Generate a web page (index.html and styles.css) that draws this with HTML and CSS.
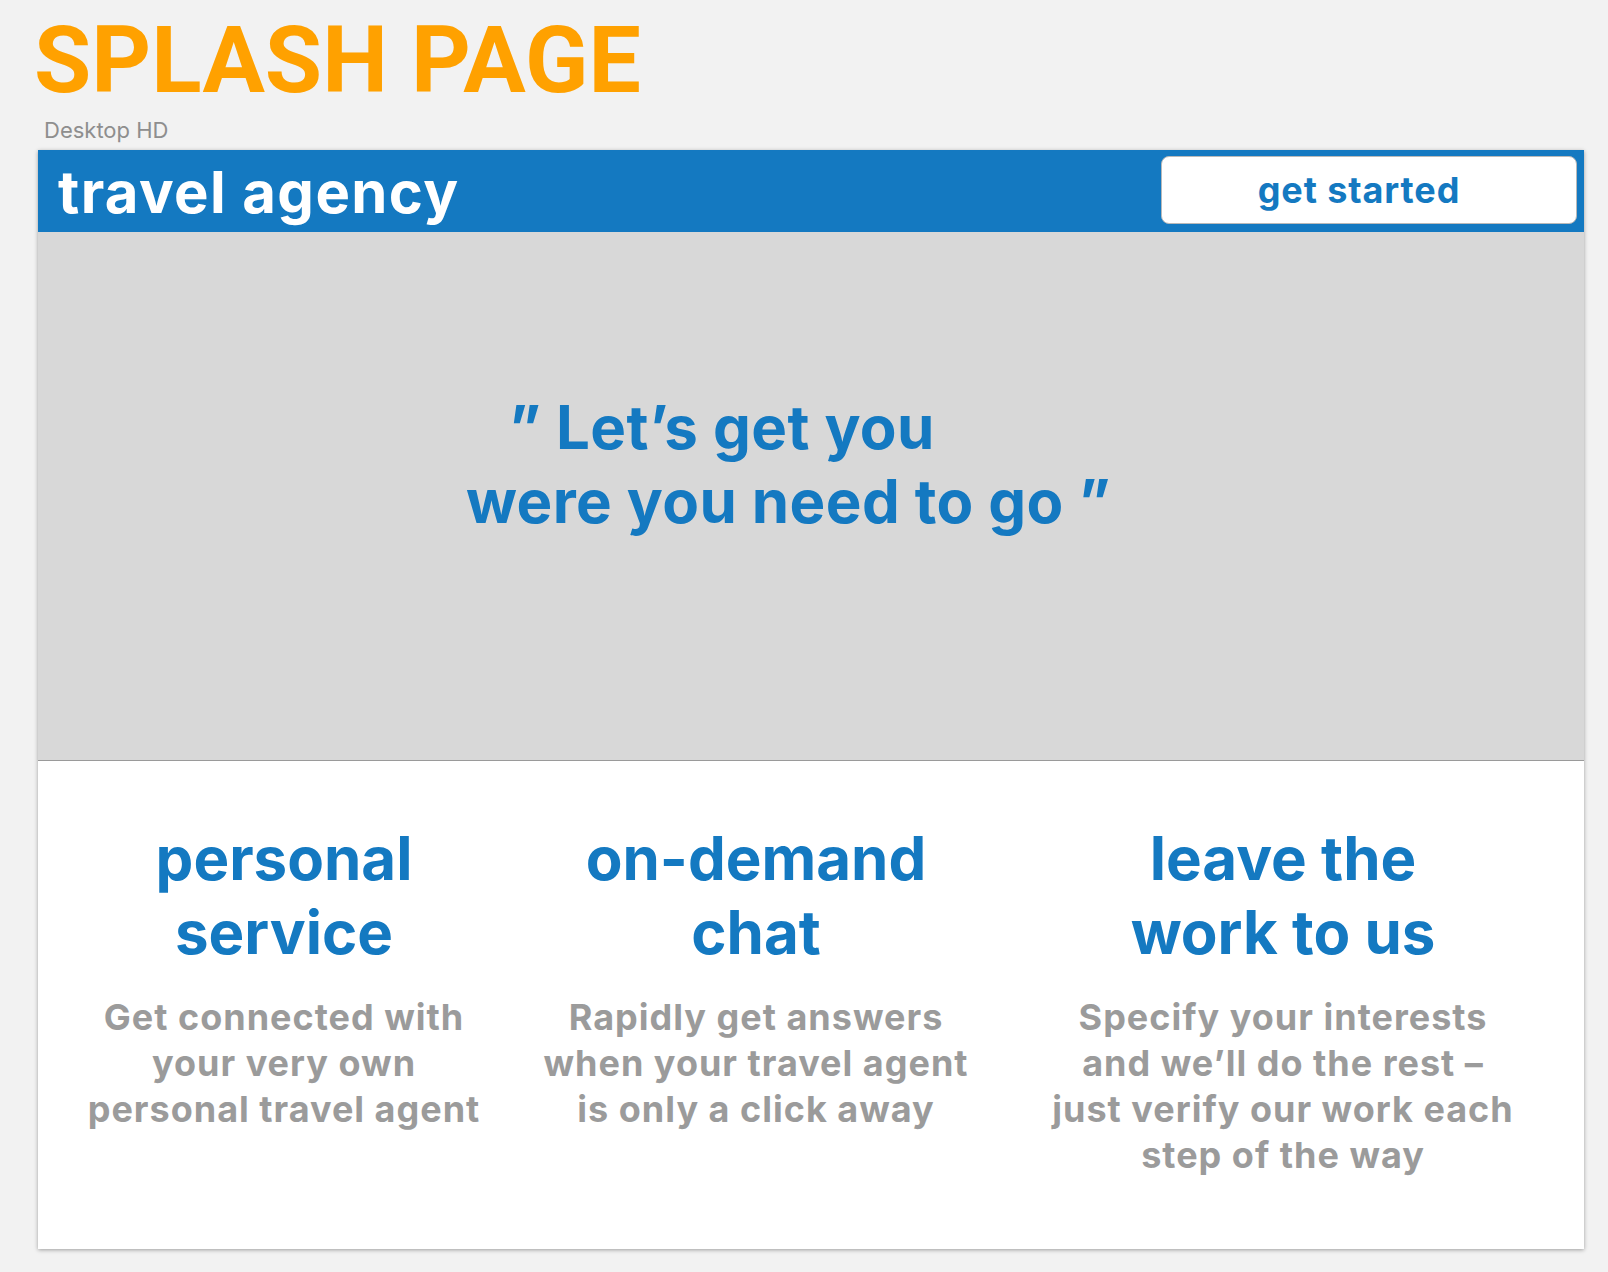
FILE: index.html
```html
<!DOCTYPE html>
<html>
<head>
<meta charset="utf-8">
<link rel="stylesheet" href="styles.css">
</head>
<body>
<h1 class="page-title">SPLASH PAGE</h1>
<div class="artboard-label">Desktop HD</div>
<div class="artboard">
  <header class="topbar">
    <div class="brand">travel agency</div>
    <button class="cta">get started</button>
  </header>
  <section class="hero">
    <p class="quote">
      <span class="q-line q-line-1">” Let’s get you</span>
      <span class="q-line q-line-2">were you need to go ”</span>
    </p>
  </section>
  <section class="features">
    <div class="feature">
      <h2 class="f-title">personal<br>service</h2>
      <p class="f-text">Get connected with<br>your very own<br>personal travel agent</p>
    </div>
    <div class="feature">
      <h2 class="f-title">on-demand<br>chat</h2>
      <p class="f-text">Rapidly get answers<br>when your travel agent<br>is only a click away</p>
    </div>
    <div class="feature">
      <h2 class="f-title">leave the<br>work to us</h2>
      <p class="f-text">Specify your interests<br>and we’ll do the rest –<br>just verify our work each<br>step of the way</p>
    </div>
  </section>
</div>
</body>
</html>
```
FILE: styles.css
```css
html, body {
  margin: 0;
  padding: 0;
}
body {
  background: #f2f2f2;
  width: 1608px;
  height: 1272px;
  overflow: hidden;
  font-family: Inter, "Liberation Sans", sans-serif;
}
.page-title {
  margin: 14px 0 0 34px;
  font-family: Roboto, sans-serif;
  font-weight: 700;
  font-size: 93px;
  line-height: 93px;
  color: #ffa100;
}
.artboard-label {
  margin: 10px 0 0 44px;
  font-family: Inter, sans-serif;
  font-size: 22px;
  line-height: 26px;
  color: #8e8e8e;
}
.artboard {
  margin: 7px 0 0 38px;
  width: 1546px;
  height: 1099px;
  background: #fff;
  box-shadow: 0 1px 4px rgba(0, 0, 0, 0.35);
  display: flex;
  flex-direction: column;
}
.topbar {
  height: 82px;
  background: #1479c1;
  display: flex;
  align-items: flex-start;
  justify-content: space-between;
  padding: 6px 7px 0 20px;
  box-sizing: border-box;
}
.brand {
  font-family: Inter, sans-serif;
  font-weight: 700;
  font-size: 58px;
  line-height: 70px;
  letter-spacing: 1.4px;
  color: #fff;
  margin-top: 1px;
}
.cta {
  width: 416px;
  height: 68px;
  background: #fff;
  border: 1px solid #b9b9b9;
  border-radius: 8px;
  font-family: Inter, sans-serif;
  font-weight: 700;
  font-size: 36px;
  color: #1479c1;
  padding: 0 20px 0 0;
  letter-spacing: 0.9px;
}
.hero {
  height: 529px;
  background: #d8d8d8;
  border-bottom: 1px solid #9a9a9a;
  box-sizing: border-box;
  padding: 158px 0 0 428px;
}
.quote {
  margin: 0;
  font-family: Inter, sans-serif;
  font-weight: 700;
  font-size: 60px;
  line-height: 74px;
  letter-spacing: 0.4px;
  color: #1479c1;
}
.q-line {
  display: block;
}
.q-line-1 {
  padding-left: 43px;
}
.features {
  flex: 1;
  display: grid;
  grid-template-columns: 428px 516px 538px;
  padding: 60px 0 0 32px;
}
.feature {
  text-align: center;
}
.f-title {
  margin: 0;
  font-family: Inter, sans-serif;
  font-weight: 700;
  font-size: 60px;
  line-height: 74px;
  color: #1479c1;
}
.f-text {
  margin: 25px 0 0;
  font-family: Inter, sans-serif;
  font-weight: 700;
  font-size: 36px;
  line-height: 46px;
  letter-spacing: 1px;
  color: #9b9b9b;
}
```
